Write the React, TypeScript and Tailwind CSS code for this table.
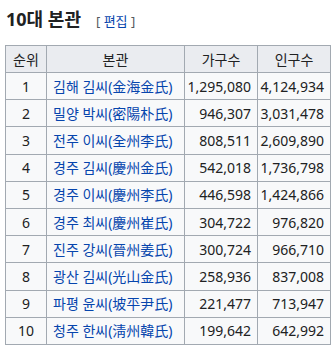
import React from "react";

const rows: [string, string, string, string][] = [
  ["1", "김해 김씨(金海金氏)", "1,295,080", "4,124,934"],
  ["2", "밀양 박씨(密陽朴氏)", "946,307", "3,031,478"],
  ["3", "전주 이씨(全州李氏)", "808,511", "2,609,890"],
  ["4", "경주 김씨(慶州金氏)", "542,018", "1,736,798"],
  ["5", "경주 이씨(慶州李氏)", "446,598", "1,424,866"],
  ["6", "경주 최씨(慶州崔氏)", "304,722", "976,820"],
  ["7", "진주 강씨(晉州姜氏)", "300,724", "966,710"],
  ["8", "광산 김씨(光山金氏)", "258,936", "837,008"],
  ["9", "파평 윤씨(坡平尹氏)", "221,477", "713,947"],
  ["10", "청주 한씨(淸州韓氏)", "199,642", "642,992"],
];

export default function App() {
  return (
    <div
      className="w-[335px] h-[347px] bg-white text-[#202122]"
      style={{ fontFamily: '"Noto Sans", "Noto Sans CJK KR", sans-serif' }}
    >
      <div className="flex items-baseline pt-[7px] pl-[6px] h-[38px]">
        <span className="text-[18px] font-bold leading-[24px]">10대 본관</span>
        <span className="ml-[15px] text-[13px] text-[#54595d]">
          [ <span className="text-[#0645ad]">편집</span> ]
        </span>
      </div>
      <table className="ml-[5px] mt-[7px] border-collapse border border-[#a2a9b1] bg-[#f8f9fa] text-[14px]">
        <thead>
          <tr className="h-[27px] bg-[#eaecf0]">
            <th className="w-[41px] border border-[#a2a9b1] font-normal text-center p-0">순위</th>
            <th className="w-[138px] border border-[#a2a9b1] font-normal text-center p-0">본관</th>
            <th className="w-[73px] border border-[#a2a9b1] font-normal text-center p-0">가구수</th>
            <th className="w-[73px] border border-[#a2a9b1] font-normal text-center p-0">인구수</th>
          </tr>
        </thead>
        <tbody>
          {rows.map((r) => (
            <tr key={r[0]} className="h-[27.2px]">
              <td className="border border-[#a2a9b1] text-center py-0 px-0">{r[0]}</td>
              <td className="border border-[#a2a9b1] pl-[6px] pr-0 py-0 text-[#0645ad] whitespace-nowrap">{r[1]}</td>
              <td className="border border-[#a2a9b1] text-right pr-[6px] pl-0 py-0">{r[2]}</td>
              <td className="border border-[#a2a9b1] text-right pr-[6px] pl-0 py-0">{r[3]}</td>
            </tr>
          ))}
        </tbody>
      </table>
    </div>
  );
}
